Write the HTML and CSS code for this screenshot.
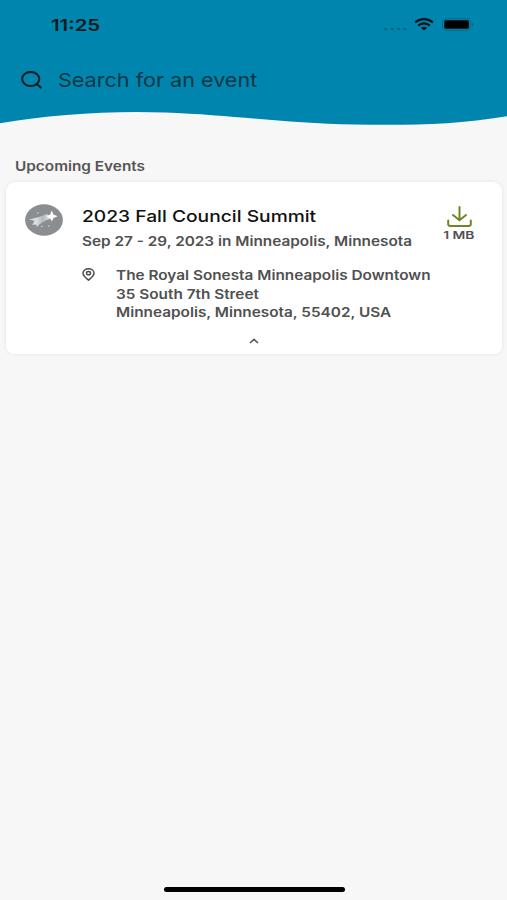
FILE: index.html
```html
<!DOCTYPE html>
<html lang="en">
<head>
<meta charset="utf-8">
<title>Events</title>
<link rel="stylesheet" href="styles.css">
</head>
<body>
<header class="header">
  <div class="status">
    <span class="wide time">11:25</span>
    <div class="indicators">
      <svg class="dots" width="24" height="4" viewBox="0 0 24 4"><path d="M1 2h3M8 2h3M14 2h3M20.500 2h3"/></svg>
      <svg class="wifi" width="20" height="13" viewBox="0 0 20 13"><path d="M1 4.400Q10-2.300 19 4.400M4.200 7.600Q10 3.300 15.800 7.600"/><path class="solid" d="M6.800 9.700Q10 7.600 13.200 9.700L10 12.500Z"/></svg>
      <svg class="battery" width="33" height="13" viewBox="0 0 33 13"><rect class="shell" x=".7" y=".8" width="27.600" height="11.400" rx="3"/><rect x="2.300" y="2.300" width="24.500" height="8.400" rx="1.400"/><path class="cap" d="M29.800 4.500Q34 6.500 29.800 8.500Z"/></svg>
    </div>
  </div>
  <div class="search">
    <svg width="22" height="18" viewBox="0 0 22 18"><ellipse cx="9.700" cy="8" rx="8.600" ry="7.100"/><path d="M15.700 13L19.800 16.500"/></svg>
    <span class="wide placeholder">Search for an event</span>
  </div>
  <svg class="wave" viewBox="0 0 507 18" width="507" height="18"><path d="M0 0H507V9.200C454 18 405 18.500 355 17.500C285 16.500 235 8 165 5.500C110 3.500 50 7.500 0 16.300Z"/></svg>
</header>
<main>
  <h1 class="heading"><span class="wide">Upcoming Events</span></h1>
  <article class="card">
    <svg class="logo" width="38" height="32" viewBox="0 0 38 32">
      <defs><linearGradient id="tail"><stop offset="0" stop-color="#c8cbcc"/><stop offset=".3" stop-color="#dddfe0"/><stop offset=".6" stop-color="#b5b9bb"/><stop offset="1" stop-color="#f3f4f4"/></linearGradient></defs>
      <ellipse cx="19" cy="16" rx="18.900" ry="15.700" fill="#8b8e90"/>
      <path d="M4 15.500Q13 14 22 10L27 14.500Q18 16 12 23L11 20.500L7 21L9.500 17Z" fill="url(#tail)"/>
      <path d="M26.800 6.500L28.500 10.500L32.600 12.200L28.500 13.900L26.800 17.500L25.100 13.900L21.500 12.200L25.100 10.500Z" fill="#fff"/>
      <path d="M12 9h1.500M16 22.500h1.500M23 22h1.500" stroke="#d8dbdc" stroke-width="1.200"/>
    </svg>
    <div class="details">
      <h2 class="title"><span class="wide">2023 Fall Council Summit</span></h2>
      <p class="date"><span class="wide">Sep 27 - 29, 2023 in Minneapolis, Minnesota</span></p>
      <div class="venue">
        <svg width="13" height="13" viewBox="0 0 13 13"><path d="M6.500 12.200C4 10 1 8 1 5.300C1 2.600 3.400.8 6.500.8S12 2.600 12 5.300C12 8 9 10 6.500 12.200Z"/><ellipse cx="6.500" cy="5.200" rx="2" ry="1.600"/></svg>
        <address class="address">
          <span class="wide">The Royal Sonesta Minneapolis Downtown</span>
          <span class="wide">35 South 7th Street</span>
          <span class="wide">Minneapolis, Minnesota, 55402, USA</span>
        </address>
      </div>
    </div>
    <div class="download">
      <svg width="25" height="21" viewBox="0 0 25 21"><path d="M12.500 1V14M6 9L12.500 14.200L19 9M1.200 14.500V18Q1.200 20 3.400 20H21.600Q23.800 20 23.800 18V14.500"/></svg>
      <span class="wide size">1 MB</span>
    </div>
    <svg class="chevron" width="10" height="6" viewBox="0 0 10 6"><path d="M1 5L5 1.400L9 5"/></svg>
  </article>
</main>
<footer class="home"></footer>
</body>
</html>
```

FILE: styles.css
```css
* { box-sizing: border-box; }
body {
  margin: 0;
  width: 507px;
  height: 900px;
  display: flex;
  flex-direction: column;
  overflow: hidden;
  background: #f7f7f7;
  color: #505050;
  font-family: Inter, "Liberation Sans", sans-serif;
}
svg { display: block; flex: none; fill: none; }
h1, h2, p { margin: 0; }
.wide {
  display: block;
  width: max-content;
  white-space: nowrap;
  transform: scaleX(1.18);
  transform-origin: left center;
}
.header { height: 125px; background: linear-gradient(#0086ae 107px, #f7f7f7 107px); display: flex; flex-direction: column; }
.status { height: 48px; padding: 1px 32px 0 51px; display: flex; align-items: center; justify-content: space-between; }
.time { color: #061b22; font-size: 16.500px; font-weight: 600; line-height: 20px; transform: scaleX(1.23); }
.indicators { display: flex; align-items: center; }
.dots { margin: 8px 7px 0 0; stroke: #075a74; stroke-width: 1.500; }
.wifi { margin-right: 8px; stroke: #02151b; stroke-width: 2.200; }
.wifi .solid { fill: #02151b; stroke: none; }
.battery { fill: #000; }
.battery .shell { fill: none; stroke: #066986; stroke-width: 1; }
.battery .cap { fill: #066986; }
.search { height: 59px; padding: 5px 0 0 21px; display: flex; align-items: center; gap: 15px; }
.search svg { stroke: #071c23; stroke-width: 2; stroke-linecap: round; }
.placeholder { color: #063746; font-size: 19px; line-height: 24px; margin-top: 2px; transform: scaleX(1.135); }
.wave { fill: #0086ae; }
.heading { height: 57px; padding: 32px 0 0 15px; font-size: 13px; font-weight: 600; line-height: 19px; color: #555; }
.card {
  width: 496px;
  height: 172px;
  margin-left: 6px;
  padding: 23px 23px 0 18px;
  display: grid;
  grid-template-columns: 58px 1fr 38px;
  grid-template-rows: 133px 6px;
  background: #fff;
  border-radius: 9px 9px 8px 8px;
  box-shadow: 0 0 4px #00000014;
}
.logo { margin: -1px 0 0 1px; }
.title { height: 24px; font-size: 16.500px; font-weight: 500; line-height: 22px; color: #111; }
.title .wide { transform: scaleX(1.165); }
.date { height: 37px; font-size: 13px; font-weight: 600; line-height: 24px; }
.venue { display: flex; gap: 21px; }
.venue svg { margin-top: 2px; stroke: #4d4d4d; stroke-width: 1.500; }
.address { font-size: 13px; font-style: normal; font-weight: 600; line-height: 18.500px; }
.download { display: flex; flex-direction: column; align-items: center; padding-top: 1px; }
.download svg { stroke: #6f8524; stroke-width: 2; stroke-linecap: round; stroke-linejoin: round; margin-right: 2px; }
.size { margin: 2px 2px 0 0; font-size: 10.500px; font-weight: 600; line-height: 14px; transform: scaleX(1.32); transform-origin: center; }
.chevron { grid-column: 1 / -1; justify-self: center; margin-left: 5px; stroke: #555; stroke-width: 1.600; }
.home { width: 181px; height: 5px; margin: auto auto 8px 164px; border-radius: 3px; background: #000; }
```
